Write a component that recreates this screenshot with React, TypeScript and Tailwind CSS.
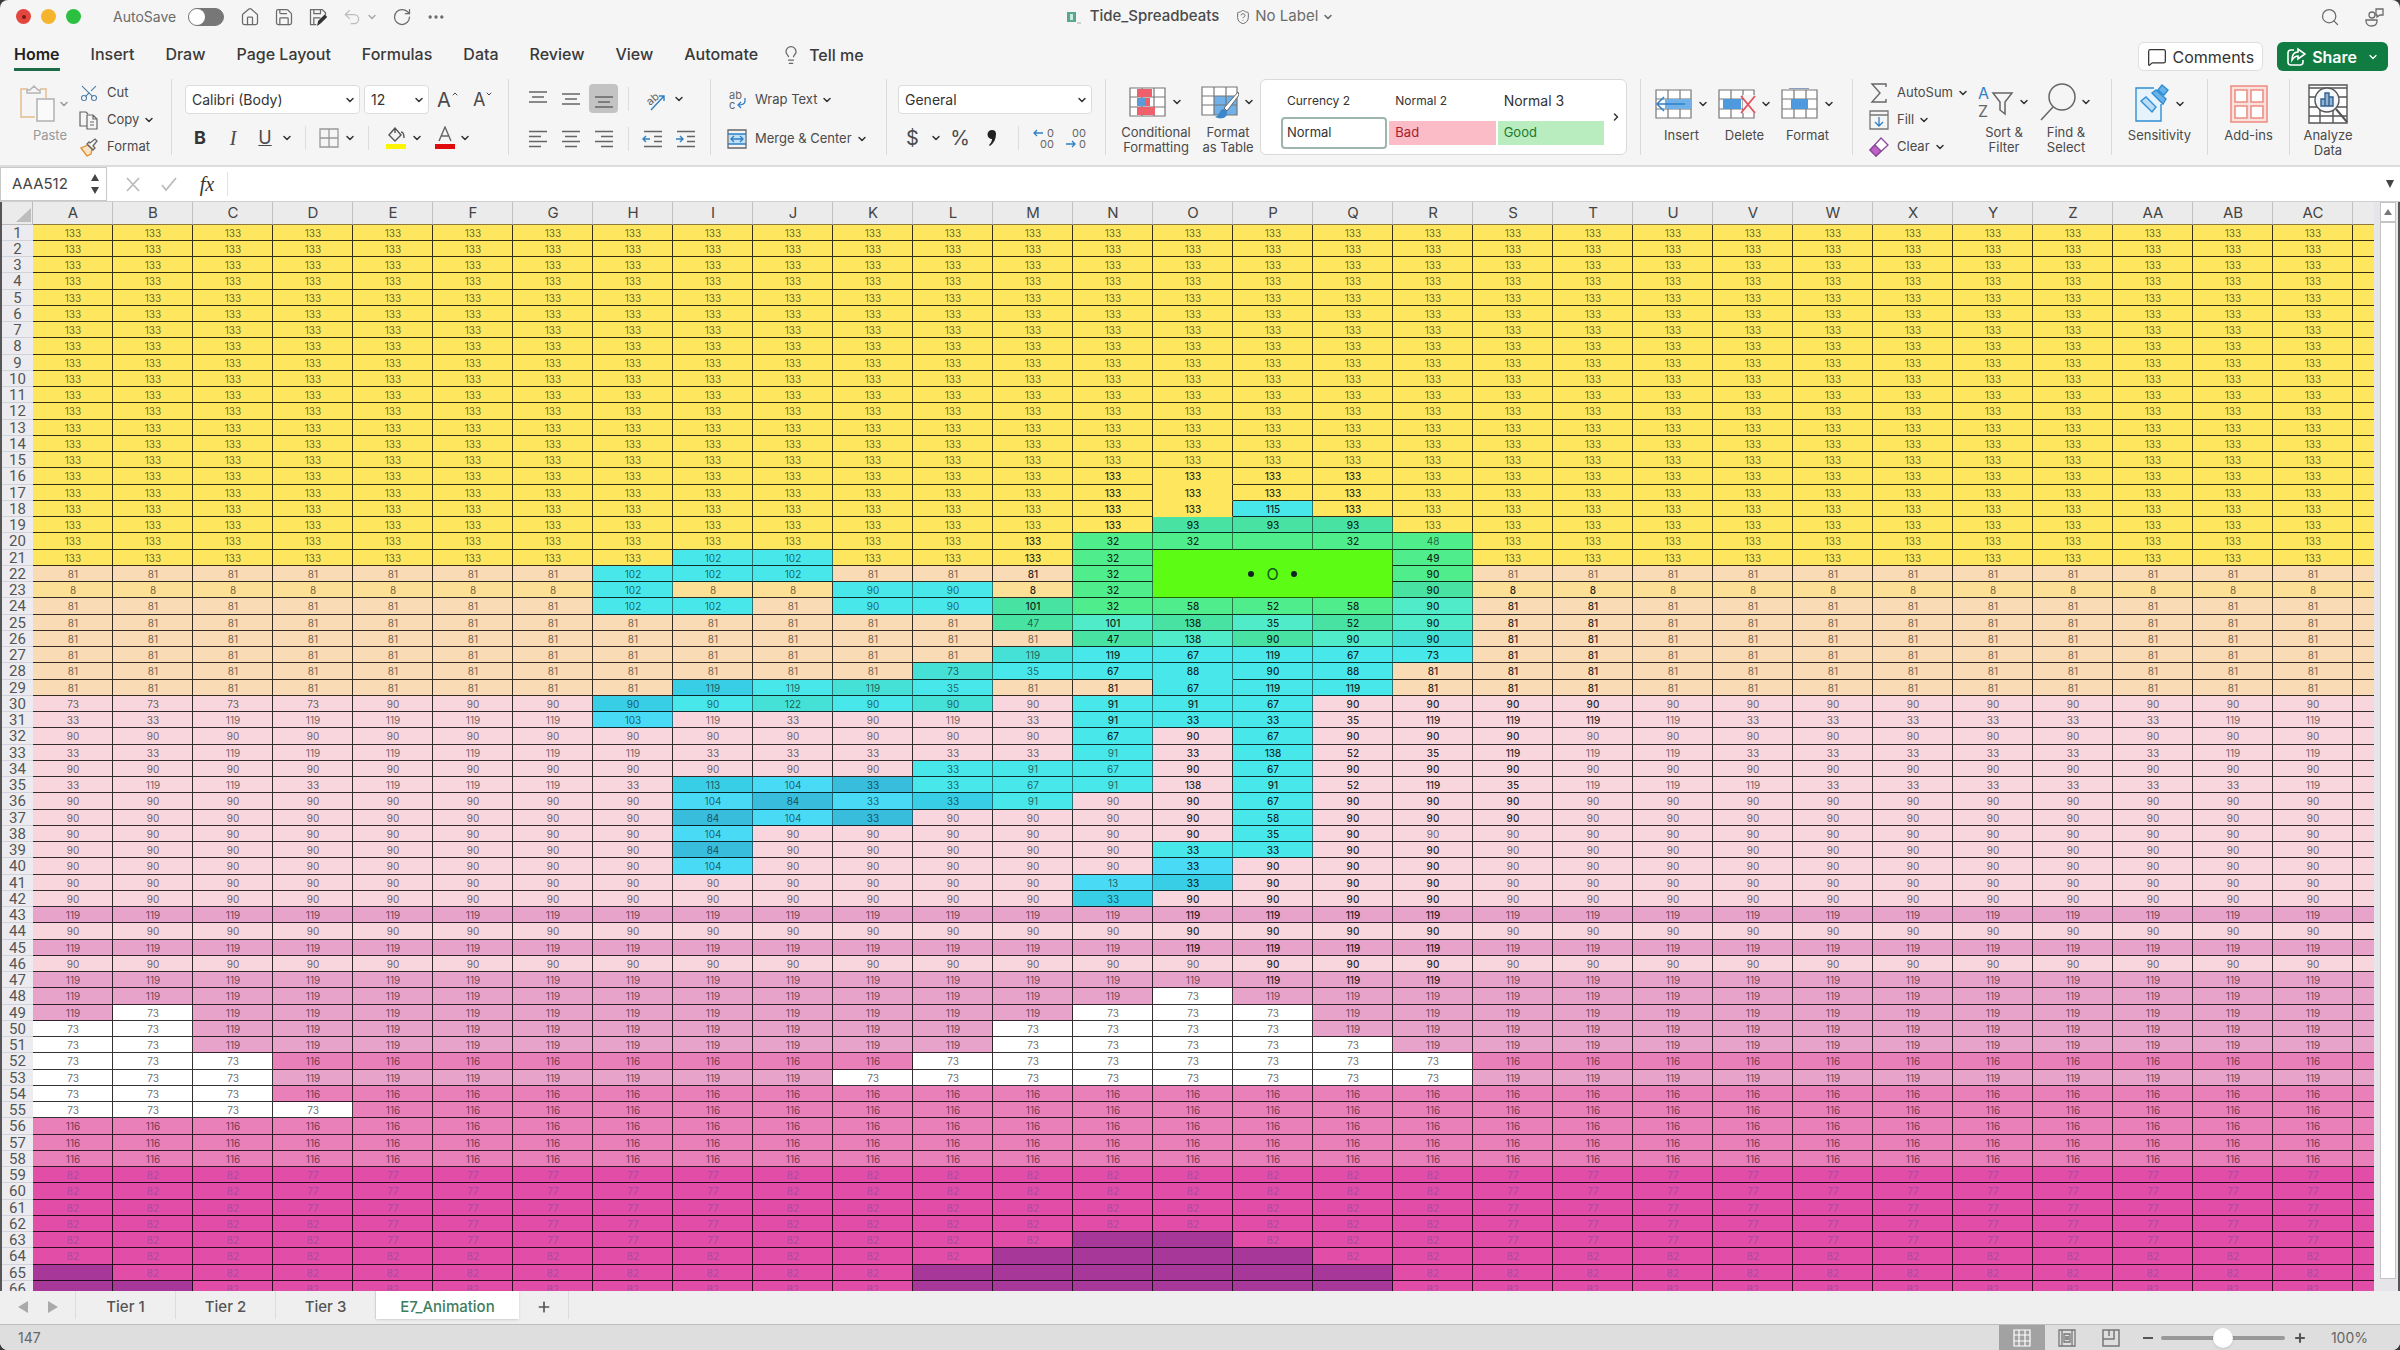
import React, { useState } from 'react';
import {
  ChevronDown,
  ChevronRight,
  ChevronUp,
  Ellipsis,
  House,
  Lightbulb,
  MessageSquare,
  Plus,
  RotateCw,
  Save,
  Scissors,
  Search,
  ShieldQuestionMark,
  Undo2,
} from 'lucide-react';
import clsx from 'clsx';

const COLUMNS = [...'ABCDEFGHIJKLMNOPQRSTUVWXYZ', 'AA', 'AB', 'AC'];
const ROW_COUNT = 66;

const fills: Record<string, string> = {
  yellow: 'bg-[#fee75e]',
  peach: 'bg-[#f9dcb6]',
  sand: 'bg-[#fbe095]',
  blush: 'bg-[#f9d6dd]',
  rose: 'bg-[#e8a3cb]',
  pink: 'bg-[#ea80ba]',
  magenta: 'bg-[#e14da7]',
  purple: 'bg-[#a73799]',
  white: 'bg-white',
  c: 'bg-[#48e8ea]',
  b: 'bg-[#38cfe6]',
  s: 'bg-[#49daf6]',
  d: 'bg-[#38bddd]',
  t: 'bg-[#50ebc8]',
  e: 'bg-[#45e0d6]',
  g: 'bg-[#50ed8c]',
  h: 'bg-[#48e3a2]',
};

// "column:value:fill" for every cell of the figure
const figure: Record<number, string> = {
  18: 'P:115:c',
  19: 'O:93:h P:93:h Q:93:h',
  20: 'N:32:g O:32:g P::g Q:32:g R:48:g',
  21: 'I:102:c J:102:c N:32:g R:49:g',
  22: 'H:102:c I:102:c J:102:c N:32:g R:90:g',
  23: 'H:102:c K:90:c L:90:c N:32:g R:90:h',
  24: 'H:102:c I:102:c K:90:c L:90:c M:101:h N:32:g O:58:g P:52:g Q:58:g R:90:t',
  25: 'M:47:h N:101:t O:138:h P:35:t Q:52:h R:90:t',
  26: 'N:47:h O:138:t P:90:h Q:90:t R:90:e',
  27: 'M:119:e N:119:c O:67:c P:119:c Q:67:c R:73:c',
  28: 'L:73:e M:35:c N:67:c O:88:c P:90:c Q:88:c',
  29: 'I:119:b J:119:c K:119:e L:35:c O:67:c P:119:c Q:119:c',
  30: 'H:90:b I:90:c J:122:e K:90:c L:90:e N:91:c O:91:c P:67:c',
  31: 'H:103:s N:91:c O:33:c P:33:c',
  32: 'N:67:c P:67:c',
  33: 'N:91:c P:138:c',
  34: 'L:33:c M:91:c N:67:c P:67:c',
  35: 'I:113:b J:104:s K:33:d L:33:c M:67:c N:91:c P:91:c',
  36: 'I:104:s J:84:d K:33:s L:33:b M:91:c P:67:c',
  37: 'I:84:d J:104:s K:33:d P:58:c',
  38: 'I:104:s P:35:c',
  39: 'I:84:d O:33:c P:33:c',
  40: 'I:104:s O:33:s',
  41: 'N:13:s O:33:b',
  42: 'N:33:b',
};

// [first column, last column] runs
const clouds: Record<number, string[][]> = {
  48: [['O', 'O']],
  49: [['B', 'B'], ['N', 'P']],
  50: [['A', 'B'], ['M', 'P']],
  51: [['A', 'B'], ['M', 'Q']],
  52: [['A', 'C'], ['L', 'R']],
  53: [['A', 'C'], ['K', 'R']],
  54: [['A', 'C']],
  55: [['A', 'D']],
};

const hills: Record<number, string[][]> = {
  63: [['N', 'O']],
  64: [['M', 'P']],
  65: [['A', 'A'], ['L', 'Q']],
  66: [['A', 'B'], ['L', 'Q']],
};

const plainValues: Record<number, string> = {
  31: '33 33 119 119 119 119 119 103 119 33 90 119 33 91 33 33 35 119 119 119 119 33 33 33 33 33 33 119 119',
  33: '33 33 119 119 119 119 119 119 33 33 33 33 33 91 33 138 52 35 119 119 119 33 33 33 33 33 33 119 119',
  35: '33 119 119 33 119 119 119 33 113 104 33 33 67 91 138 91 52 119 35 119 119 119 33 33 33 33 33 33 119',
};

// rows in which a column is written in the darker ink
const inked: Record<string, [number, number]> = {
  M: [20, 24],
  N: [16, 32],
  O: [16, 45],
  P: [16, 47],
  Q: [16, 47],
  R: [21, 47],
  S: [23, 37],
  T: [23, 31],
};

const inRuns = (runs: string[][] | undefined, col: number) =>
  (runs ?? []).some(([a, b]) => col >= COLUMNS.indexOf(a) && col <= COLUMNS.indexOf(b));

const baseFor = (row: number, col: number): [string, string] => {
  if (row <= 21) return ['133', 'yellow'];
  if (row === 23) return ['8', 'sand'];
  if (row <= 29) return ['81', 'peach'];
  if (row === 30 && col < 4) return ['73', 'blush'];
  if (row <= 42 || row === 44 || row === 46) return ['90', 'blush'];
  if (row <= 51 || row === 53) return ['119', 'rose'];
  if (row <= 58) return ['116', 'pink'];
  const low = row >= 64 || col < 3 || (col < 4 && row > 61) || (col > 8 && col < 18);
  return [low ? '82' : '77', 'magenta'];
};

const cellFor = (row: number, col: number) => {
  let [value, fill] = baseFor(row, col);
  if (plainValues[row]) value = plainValues[row].split(' ')[col] ?? '';
  const painted = (figure[row] ?? '')
    .split(' ')
    .map((c) => c.split(':'))
    .find(([name]) => name === COLUMNS[col]);
  if (painted) [, value, fill] = painted;
  if (inRuns(clouds[row], col)) [value, fill] = ['73', 'white'];
  if (inRuns(hills[row], col)) [value, fill] = ['', 'purple'];
  const range = inked[COLUMNS[col]];
  const dark = !!range && row >= range[0] && row <= range[1] && !(COLUMNS[col] === 'R' && row === 38);
  return { value, fill, dark, painted: !!painted };
};

const Chevron = ({ className = '' }: { className?: string }) => (
  <ChevronDown className={clsx('size-3 shrink-0 text-[#333]', className)} strokeWidth={3} />
);

const Divider = () => <div className="w-px shrink-0 self-stretch bg-[#dadada]" />;
const ShortDivider = () => <div className="h-6 w-px shrink-0 bg-[#dddddd]" />;

const TitleBar = () => (
  <header className="grid h-[33px] shrink-0 grid-cols-3 items-center px-4 text-[#6b6b6b]">
    <div className="flex items-center">
      <div className="flex gap-[10px]">
        <span className="flex size-[15px] items-center justify-center rounded-full bg-[#e2463f]">
          <span className="size-1 rounded-full bg-[#7c1a14]" />
        </span>
        <span className="size-[15px] rounded-full bg-[#f6b42c]" />
        <span className="size-[15px] rounded-full bg-[#2bc03f]" />
      </div>
      <label className="ml-8 flex items-center gap-3 text-sm">
        AutoSave
        <input type="checkbox" role="switch" className="peer sr-only" />
        <span className="flex h-[18px] w-9 items-center rounded-full border border-[#777] bg-[#777]">
          <span className="size-4 rounded-full bg-white" />
        </span>
      </label>
      <div className="ml-4 flex items-center gap-[14px]">
        <button aria-label="Home"><House className="size-5" strokeWidth={1.5} /></button>
        <button aria-label="Save"><Save className="size-5" strokeWidth={1.5} /></button>
        <button aria-label="Save as">
          <svg className="size-5" viewBox="0 0 24 24" fill="none" stroke="currentColor" strokeWidth="1.500">
            <path d="M10 21H3V3h14l4 4v3M7 3v5h8V3M7 21v-8h8" />
            <path d="m12 21 1-4 7-7 2 2-7 7z" fill="#333" stroke="#333" />
          </svg>
        </button>
        <button aria-label="Undo" className="flex items-center gap-1 text-[#bcbcbc]">
          <Undo2 className="size-5" strokeWidth={1.5} />
          <Chevron className="text-[#aaa]" />
        </button>
        <button aria-label="Redo"><RotateCw className="size-5" strokeWidth={1.5} /></button>
        <button aria-label="More"><Ellipsis className="size-5" /></button>
      </div>
    </div>
    <div className="flex items-center justify-center text-[15px]">
      <svg className="mr-2 h-4 w-4" viewBox="0 0 16 16" fill="none">
        <rect x="1" y="3" width="9" height="10" fill="#5aa88a" />
        <rect x="4" y="5" width="3" height="6" fill="#cfe9df" />
        <path d="M11 14h4" stroke="#aaa" />
      </svg>
      <span className="font-medium text-[#4a4a4a]">Tide_Spreadbeats</span>
      <button className="ml-4 flex items-center gap-1">
        <ShieldQuestionMark className="size-4" strokeWidth={1.5} />
        No Label
        <Chevron className="text-[#666]" />
      </button>
    </div>
    <div className="flex items-center justify-end gap-6">
      <button aria-label="Search"><Search className="size-5" strokeWidth={1.5} /></button>
      <button aria-label="Presence">
        <svg className="size-5" viewBox="0 0 20 20" fill="none" stroke="currentColor" strokeWidth="1.3">
          <circle cx="8" cy="8" r="3" />
          <path d="M2 13h11v1c0 3-2 5-5.500 5S2 17 2 14z" />
          <path d="M12 2h7v6h-3l-3 2V8h-1z" />
        </svg>
      </button>
    </div>
  </header>
);

const RibbonTabs = () => {
  const tabs = ['Home', 'Insert', 'Draw', 'Page Layout', 'Formulas', 'Data', 'Review', 'View', 'Automate'];
  return (
    <nav className="flex h-[43px] shrink-0 items-center justify-between pr-3 pl-[14px] text-base text-[#3a3a3a]">
      <div className="flex items-center gap-[31px]">
        {tabs.map((tab, i) => (
          <button
            key={tab}
            className={clsx(
              'border-b-[3px] pt-[3px] pb-0.5 leading-6',
              i === 0 ? 'border-[#1e6b48] font-semibold text-[#222]' : 'border-transparent font-medium',
            )}
          >
            {tab}
          </button>
        ))}
        <button className="-ml-2 flex items-center gap-2 font-medium">
          <Lightbulb className="size-5 text-[#666]" strokeWidth={1.5} />
          Tell me
        </button>
      </div>
      <div className="flex gap-[14px] pt-1">
        <button className="flex h-[29px] items-center gap-1.5 rounded-md border border-[#dedede] bg-white px-2 text-[#333]">
          <MessageSquare className="size-5" strokeWidth={1.5} />
          Comments
        </button>
        <button className="flex h-[29px] items-center gap-1.5 rounded-md bg-[#107c41] px-[9px] font-semibold text-white">
          <svg className="size-5" viewBox="0 0 20 20" fill="none" stroke="currentColor" strokeWidth="1.600">
            <path d="M8 3H5a3 3 0 0 0-3 3v9a3 3 0 0 0 3 3h9a3 3 0 0 0 3-3v-2" />
            <path d="M12 2v3c-4 0-6 3-6 8 2-3 3-4 6-4v3l7-5z" />
          </svg>
          Share
          <ChevronDown className="ml-1 size-3" strokeWidth={2.5} />
        </button>
      </div>
    </nav>
  );
};

const SmallButton = ({ icon, label, arrow }: { icon: React.ReactNode; label: string; arrow?: boolean }) => (
  <button className="flex h-[27px] shrink-0 items-center text-[13px]">
    <span className="flex w-7 justify-center">{icon}</span>
    <span className="ml-1">{label}</span>
    {arrow && <Chevron className="ml-1" />}
  </button>
);

const BigButton = ({ icon, lines, arrow, className }: {
  icon: React.ReactNode;
  lines: string[];
  arrow?: boolean;
  className?: string;
}) => (
  <button className={clsx('flex shrink-0 flex-col items-center text-[13px] leading-[15px]', className)}>
    <span className="flex h-[49px] items-center gap-1">
      {icon}
      {arrow && <Chevron />}
    </span>
    {lines.map((line) => <span key={line}>{line}</span>)}
  </button>
);

const Lines = ({ align, low }: { align: 'left' | 'center' | 'right'; low?: string }) => {
  const short = align === 'left' ? 'M2 8.500h12M2 18.500h12' : align === 'right' ? 'M8 8.500h12M8 18.500h12' : 'M5 8.500h12M5 18.500h12';
  return (
    <svg className="size-[22px]" viewBox="0 0 22 22" stroke="#666" strokeWidth="1.4" fill="none">
      <path d={low ?? 'M2 3.500h18M2 13.500h18'} />
      {!low && <path d={short} />}
    </svg>
  );
};

const Indent = ({ flip }: { flip?: boolean }) => (
  <svg className="size-[22px]" viewBox="0 0 22 22" fill="none" strokeWidth="1.4">
    <path d="M2 3.500h18M12 8.500h8M12 13.500h8M2 18.500h18" stroke="#666" />
    <path d={flip ? 'M1 11h7M5 8l3 3-3 3' : 'M8 11H1M4 8l-3 3 3 3'} stroke="#2f7fc4" />
  </svg>
);

const Sheet = ({ children }: { children?: React.ReactNode }) => (
  <svg className="h-8 w-[38px]" viewBox="0 0 38 32" fill="none">
    <rect x="1" y="2" width="35" height="28" fill="#fff" />
    <path d="M1 2h35v28H1zM1 11h35M1 21h35M13 2v28M25 2v28" stroke="#777" strokeWidth="1.200" />
    {children}
  </svg>
);

const iconButton = 'flex h-7 w-[33px] items-center justify-center';

const Ribbon = () => (
  <section className="flex h-[88px] shrink-0 items-start border-b-2 border-[#dddddd] text-[#4a4a4a]">
    <div className="flex h-[76px] w-full">
      <div className="flex w-[171px] shrink-0 pl-[18px]">
        <button className="flex w-[57px] flex-col text-[13px] leading-[15px] text-[#999]">
          <span className="flex h-[49px] items-center">
            <svg className="h-10 w-10" viewBox="0 0 40 40" fill="none" strokeWidth="1.500">
              <path d="M10 5H3v28h14M22 5h6v9" stroke="#e4bc8c" />
              <path d="M9 9V6h3l4-4 4 4h2v3z" stroke="#b5b5b5" fill="#f6f6f6" />
              <path d="M19 15h17v22H19z" stroke="#b0b0b0" fill="#fafafa" />
            </svg>
            <Chevron className="text-[#999]" />
          </span>
          <span className="ml-[7px]">Paste</span>
        </button>
        <div className="flex flex-col">
          <SmallButton
            icon={<Scissors className="size-5 -rotate-90 text-[#4c7ea8]" strokeWidth={1.3} />}
            label="Cut"
          />
          <SmallButton
            icon={
              <svg className="size-5" viewBox="0 0 20 20" fill="none" stroke="#666" strokeWidth="1.200">
                <path d="M8 16H1V2h6l2 2" />
                <path d="M8 5h6l4 4v10H8zM14 5v4h4M11 12h4M11 15h4" />
              </svg>
            }
            label="Copy"
            arrow
          />
          <SmallButton
            icon={
              <svg className="size-5" viewBox="0 0 20 20" fill="none" strokeWidth="1.300">
                <path d="m9 8-7 3 6 8 4-2 1-5z" stroke="#e08a2c" fill="#fbe3c6" />
                <path d="m8 7 6 6 2-2-2-2 4-5-2-2-5 4-1-1z" stroke="#666" />
              </svg>
            }
            label="Format"
          />
        </div>
      </div>
      <Divider />

      <div className="flex w-[336px] shrink-0 flex-col gap-[10px] pt-[6px] pl-[13px]">
        <div className="flex items-center gap-1">
          <span className="relative">
            <select aria-label="Font" className="h-[29px] w-[175px] appearance-none rounded-sm border border-[#dcdcdc] bg-white px-1.5 text-sm text-[#333]">
              <option>Calibri (Body)</option>
            </select>
            <Chevron className="pointer-events-none absolute top-[9px] right-1" />
          </span>
          <span className="relative">
            <select aria-label="Font size" className="h-[29px] w-[65px] appearance-none rounded-sm border border-[#dcdcdc] bg-white px-1.5 text-sm text-[#333]">
              <option>12</option>
            </select>
            <Chevron className="pointer-events-none absolute top-[9px] right-1" />
          </span>
          <button className="ml-1 flex w-7 items-center text-xl leading-7" aria-label="Increase font size">
            A<ChevronUp className="-mt-3 size-2" strokeWidth={3} />
          </button>
          <button className="ml-1 flex w-7 items-center text-lg leading-7" aria-label="Decrease font size">
            A<ChevronDown className="-mt-3 size-2" strokeWidth={3} />
          </button>
        </div>
        <div className="flex h-7 items-center">
          <button className="w-[30px] text-lg font-bold text-[#333]">B</button>
          <button className="w-9 font-['Liberation_Serif',serif] text-xl italic">I</button>
          <button className="w-7 text-lg underline">U</button>
          <Chevron className="mr-3 ml-0.5" />
          <ShortDivider />
          <button className="ml-3 flex items-center gap-1" aria-label="Borders">
            <svg className="size-[22px]" viewBox="0 0 22 22" fill="none" stroke="#999" strokeWidth="1.300">
              <path d="M2 2h18v18H2zM11 2v18M2 11h18" />
            </svg>
            <Chevron />
          </button>
          <div className="ml-3"><ShortDivider /></div>
          <button className="ml-4 flex items-center gap-1" aria-label="Fill colour">
            <svg className="h-6 w-[22px]" viewBox="0 0 22 24" fill="none">
              <path d="M10 2 4 9l6 6 6-6zM10 2v5M16 6c3 0 3 3 3 6" stroke="#555" strokeWidth="1.400" />
              <path d="M1 18h20v5H1z" fill="#fdf500" />
            </svg>
            <Chevron />
          </button>
          <button className="ml-3 flex items-center gap-1" aria-label="Font colour">
            <svg className="h-6 w-[20px]" viewBox="0 0 20 24" fill="none">
              <path d="m4 15 6-14 6 14M6 10h8" stroke="#666" strokeWidth="1.400" />
              <path d="M0 18h20v5H0z" fill="#e00b0b" />
            </svg>
            <Chevron />
          </button>
        </div>
      </div>
      <Divider />

      <div className="flex w-[201px] shrink-0 flex-col gap-3 pt-[5px] pl-3">
        <div className="flex items-center">
          <button className={iconButton} aria-label="Top"><Lines align="center" low="M2 4h18M5 9h12M2 14h18" /></button>
          <button className={iconButton} aria-label="Middle"><Lines align="center" low="M2 6h18M5 11h12M2 16h18" /></button>
          <button className="mx-0.5 flex h-[29px] w-[29px] items-center justify-center rounded-sm bg-[#c3c3c3]" aria-label="Bottom">
            <Lines align="center" low="M2 9h18M5 14h12M2 19h18" />
          </button>
          <div className="ml-2"><ShortDivider /></div>
          <button className="ml-3 flex items-center gap-1" aria-label="Orientation">
            <svg className="size-7" viewBox="0 0 28 28" fill="none">
              <text x="5" y="18" fontSize="11" fill="#666" transform="rotate(-40 11 14)">ab</text>
              <path d="M10 25 23 11M23 16v-5h-5" stroke="#2f7fc4" strokeWidth="1.400" />
            </svg>
            <Chevron />
          </button>
        </div>
        <div className="flex items-center">
          <button className={iconButton} aria-label="Align left"><Lines align="left" /></button>
          <button className={iconButton} aria-label="Align center"><Lines align="center" /></button>
          <button className={iconButton} aria-label="Align right"><Lines align="right" /></button>
          <div className="ml-2"><ShortDivider /></div>
          <button className="ml-2 flex h-7 w-8 items-center justify-center" aria-label="Decrease indent"><Indent /></button>
          <button className="flex h-7 w-[33px] items-center justify-center" aria-label="Increase indent"><Indent flip /></button>
        </div>
      </div>
      <Divider />

      <div className="flex w-[175px] shrink-0 flex-col gap-3 pt-[7px] pl-3">
        <SmallButton
          icon={
            <svg className="h-[26px] w-6" viewBox="0 0 24 26" fill="none">
              <text x="4" y="12" fontSize="11" fill="#666">ab</text>
              <text x="4" y="22" fontSize="11" fill="#666">c</text>
              <path d="M20 11v3c0 3-2 4-7 4M16 15l-3 3 3 3" stroke="#2f7fc4" strokeWidth="1.300" />
            </svg>
          }
          label="Wrap Text"
          arrow
        />
        <SmallButton
          icon={
            <svg className="size-5" viewBox="0 0 20 20" fill="none">
              <path d="M1 1h18v18H1z" stroke="#666" strokeWidth="1.300" />
              <path d="M2 5h16v10H2z" fill="#bfe0f7" />
              <path d="M4 10h12M7 7l-3 3 3 3M13 7l3 3-3 3M1 5h18M1 15h18" stroke="#2f7fc4" strokeWidth="1.300" />
            </svg>
          }
          label="Merge & Center"
          arrow
        />
      </div>
      <Divider />

      <div className="flex w-[218px] shrink-0 flex-col gap-[10px] pt-[6px] pl-[11px]">
        <span className="relative w-[194px]">
          <select aria-label="Number format" className="h-[29px] w-full appearance-none rounded-sm border border-[#dcdcdc] bg-white px-1.5 text-sm text-[#333]">
            <option>General</option>
          </select>
          <Chevron className="pointer-events-none absolute top-[9px] right-1" />
        </span>
        <div className="flex h-7 items-center text-xl">
          <button className="flex w-11 items-center justify-between pl-2" aria-label="Currency">$<Chevron /></button>
          <button className="ml-1 w-7" aria-label="Percent">%</button>
          <button className="ml-1 flex w-7 justify-center" aria-label="Comma">
            <svg className="h-5 w-3" viewBox="0 0 12 20"><path d="M6 2a4 4 0 0 1 4 4c0 5-2 9-6 12l-1-1c2-2 3-4 3-6a4 4 0 1 1 0-9" fill="#222" /></svg>
          </button>
          <div className="mr-1 ml-3"><ShortDivider /></div>
          {['Increase decimal', 'Decrease decimal'].map((name, i) => (
            <button key={name} className="ml-2.5 w-[22px]" aria-label={name}>
              <svg className="h-[26px] w-[22px]" viewBox="0 0 22 26" fill="none">
                <text x={i ? 7 : 14} y="12" fontSize="11" fill="#666">{i ? '00' : '0'}</text>
                <text x={i ? 14 : 7} y="23" fontSize="11" fill="#666">{i ? '0' : '00'}</text>
                <path d={i ? 'M1 19h9M7 16l3 3-3 3' : 'M10 8H1M4 5 1 8l3 3'} stroke="#2f7fc4" strokeWidth="1.300" />
              </svg>
            </button>
          ))}
        </div>
      </div>
      <Divider />

      <div className="flex w-[154px] shrink-0">
        <BigButton
          className="w-[100px]"
          arrow
          lines={['Conditional', 'Formatting']}
          icon={
            <Sheet>
              <path d="M8 3h15v8H8zM16 12h5v8h-5zM8 21h18v8H8z" fill="#f0606c" />
              <path d="M8 12h8v8H8z" fill="#5b9bd8" />
            </Sheet>
          }
        />
        <BigButton
          className="-ml-2 w-[60px]"
          arrow
          lines={['Format', 'as Table']}
          icon={
            <svg className="h-9 w-[38px]" viewBox="0 0 38 36" fill="none">
              <path d="M1 3h35v28H1z" fill="#fff" />
              <path d="M13 12h23v19H13z" fill="#6fb1e8" />
              <path d="M1 3h35v28H1zM1 12h35M1 21h35M13 3v28M25 3v28" stroke="#777" strokeWidth="1.200" />
              <path d="m37 8-14 16 3 3 12-16z" fill="#fff" stroke="#666" />
              <path d="M23 25c-5 0-4 7-9 8 6 3 13 1 12-5z" fill="#3b86cc" />
            </svg>
          }
        />
      </div>

      <div className="flex min-w-0 flex-1 items-center rounded-md border border-[#d9d9d9] bg-white pr-1 pl-5 text-[#333]">
        <div className="grid h-16 flex-1 grid-cols-3 grid-rows-2 gap-x-0.5 text-left">
          <button className="px-1.5 text-left text-xs">Currency 2</button>
          <button className="px-1.5 text-left text-xs">Normal 2</button>
          <button className="px-1.5 text-left text-sm">Normal 3</button>
          <button className="rounded-sm border-2 border-[#9db5ab] px-1 text-left text-[13px]">Normal</button>
          <button className="my-1 bg-[#fbbcc8] px-1.5 text-left text-[13px] text-[#a8202c]">Bad</button>
          <button className="my-1 bg-[#b9edc0] px-1.5 text-left text-[13px] text-[#1d7a2e]">Good</button>
        </div>
        <button aria-label="More styles" className="ml-1.5"><ChevronRight className="size-3" strokeWidth={3} /></button>
      </div>
      <div className="ml-[13px] flex"><Divider /></div>

      <div className="flex w-[211px] shrink-0 pl-[9px]">
        <BigButton
          className="w-[63px]"
          arrow
          lines={['Insert']}
          icon={
            <Sheet>
              <path d="M10 11h27v10H10z" fill="#6fb1e8" />
              <path d="M30 16H2M9 9l-7 7 7 7" stroke="#2f7fc4" strokeWidth="1.500" />
            </Sheet>
          }
        />
        <BigButton
          className="w-[63px]"
          arrow
          lines={['Delete']}
          icon={
            <Sheet>
              <path d="M5 11h18v10H5z" fill="#4f9ade" />
              <path d="M25 7h13v18H25z" fill="#f5f5f5" />
              <path d="m23 8 14 17M37 8 23 25" stroke="#e4505c" strokeWidth="1.800" />
            </Sheet>
          }
        />
        <BigButton
          className="w-[63px]"
          arrow
          lines={['Format']}
          icon={
            <Sheet>
              <path d="M10 11h17v10H10z" fill="#4f9ade" />
              <path d="M8 0h20" stroke="#667fb0" strokeWidth="1.500" />
            </Sheet>
          }
        />
      </div>
      <Divider />

      <div className="flex w-[258px] shrink-0 pl-3">
        <div className="flex w-[108px] shrink-0 flex-col">
          <SmallButton
            icon={<svg className="size-5" viewBox="0 0 20 20" fill="none" stroke="#666" strokeWidth="1.400"><path d="M17 4V1H3l8 9-8 9h14v-3" /></svg>}
            label="AutoSum"
            arrow
          />
          <SmallButton
            icon={
              <svg className="size-5" viewBox="0 0 20 20" fill="none" strokeWidth="1.300">
                <path d="M1 1h18v18H1zM1 5h18" stroke="#777" />
                <path d="M10 7v9M6 12l4 4 4-4" stroke="#2f7fc4" />
              </svg>
            }
            label="Fill"
            arrow
          />
          <SmallButton
            icon={
              <svg className="size-5" viewBox="0 0 20 20" fill="none" stroke="#8a4a9a" strokeWidth="1.300">
                <path d="M12 1 1 13l6 6L19 8z" fill="#fff" />
                <path d="m6 8-5 5 6 6 5-5z" fill="#c05fc8" />
              </svg>
            }
            label="Clear"
            arrow
          />
        </div>
        <BigButton
          className="w-[62px]"
          arrow
          lines={['Sort &', 'Filter']}
          icon={
            <svg className="h-10 w-9" viewBox="0 0 36 40" fill="none">
              <text x="0" y="17" fontSize="16" fill="#2f7fc4">A</text>
              <text x="0" y="35" fontSize="16" fill="#666">Z</text>
              <path d="M15 11h19l-7 9v12l-5-4v-8z" stroke="#666" strokeWidth="1.500" />
            </svg>
          }
        />
        <BigButton
          className="w-[62px]"
          arrow
          lines={['Find &', 'Select']}
          icon={
            <svg className="h-10 w-9" viewBox="0 0 36 40" fill="none" stroke="#666" strokeWidth="1.500">
              <circle cx="22" cy="15" r="13" />
              <path d="M13 25 1 38" />
            </svg>
          }
        />
      </div>
      <Divider />

      <BigButton
        className="w-[95px]"
        arrow
        lines={['Sensitivity']}
        icon={
          <svg className="h-10 w-9" viewBox="0 0 36 40" fill="none" stroke="#2f8fd4" strokeWidth="1.400">
            <path d="M20 4H2v33h25V20" fill="#e6f3fd" />
            <path d="m7 17 5-4 10 10-4 5z" fill="#bcdcf5" />
            <path d="m18 9 4-3 10 9-3 5zM24 6l4-5 6 5-4 5z" fill="#69b2ea" />
          </svg>
        }
      />
      <Divider />
      <BigButton
        className="w-[81px]"
        lines={['Add-ins']}
        icon={
          <svg className="h-10 w-[38px]" viewBox="0 0 38 40" fill="none" stroke="#ec8a80" strokeWidth="1.500">
            <path d="M1 2h36v36H1z" fill="#fbe0dc" />
            <path d="M5 6h12v12H5zM21 6h12v12H21zM5 22h12v12H5zM21 22h12v12H21z" fill="#fff" />
          </svg>
        }
      />
      <Divider />
      <div className="w-[110px] shrink-0">
        <BigButton
          className="w-[76px]"
          lines={['Analyze', 'Data']}
          icon={
            <svg className="h-[42px] w-10" viewBox="0 0 40 42" fill="none" stroke="#555" strokeWidth="1.400">
              <path d="M1 2h38v38H1zM1 5h38M1 14h38M1 24h38M1 33h38M12 24v16M25 24v16" fill="#fff" />
              <circle cx="19" cy="17" r="12" fill="#f4f8fc" />
              <path d="m28 26 11 13" strokeWidth="2" />
              <path d="M13 16h4v7h-4zM17 10h4v13h-4zM21 14h4v9h-4z" fill="#8fb4d8" stroke="#345f8a" />
            </svg>
          }
        />
      </div>
    </div>
  </section>
);

const FormulaBar = () => (
  <div className="flex h-[34px] shrink-0 items-center bg-white">
    <div className="flex h-full w-[107px] items-center justify-between border border-[#c9c9c9] pr-1.5 pl-[11px]">
      <input aria-label="Name box" defaultValue="AAA512" className="w-[70px] text-[15px] text-[#444] outline-none" />
      <svg className="h-6 w-2.5" viewBox="0 0 10 24" fill="#444">
        <path d="m5 2 4 7H1zM5 22l4-7H1z" />
      </svg>
    </div>
    <div className="flex items-center gap-4 pl-4 text-[#bbb]">
      <button aria-label="Cancel">
        <svg className="size-5" viewBox="0 0 20 20" stroke="currentColor" strokeWidth="1.800"><path d="m4 4 12 13M16 4 4 17" /></svg>
      </button>
      <button aria-label="Enter">
        <svg className="size-5" viewBox="0 0 20 20" fill="none" stroke="currentColor" strokeWidth="1.800"><path d="m3 11 4 5L17 4" /></svg>
      </button>
      <button aria-label="Insert function" className="w-6 font-['Liberation_Serif',serif] text-xl text-[#333] italic">fx</button>
    </div>
    <div className="ml-2 h-6 w-px bg-[#e4e4e4]" />
    <input aria-label="Formula" className="h-full flex-1 px-2 outline-none" />
    <button aria-label="Expand formula bar" className="w-5">
      <svg className="mx-auto h-2 w-2" viewBox="0 0 8 8"><path d="M0 0h8L4 8z" fill="#444" /></svg>
    </button>
  </div>
);

const Grid = () => (
  <div className="flex min-h-0 flex-1 overflow-hidden border-t border-[#cfcfcf]">
    <table className="w-full table-fixed border-separate border-spacing-0 self-start border-l-2 border-[#555] bg-[#ececf0] text-center">
      <colgroup>
        <col className="w-[31px]" />
        {COLUMNS.map((name) => <col key={name} />)}
        <col className="w-[21px]" />
      </colgroup>
      <thead>
        <tr className="h-[23px] bg-[#ebebeb] text-[15px] leading-5 text-[#444]">
          <th className="border-r border-b border-[#bcbcbc]" aria-label="Select all">
            <svg className="mt-1 ml-auto h-3.5 w-4" viewBox="0 0 16 14"><path d="M15 0v14H0z" fill="#bdbdbd" /></svg>
          </th>
          {COLUMNS.map((name) => (
            <th key={name} scope="col" className="border-r border-b border-r-[#c0c0c0] border-b-[#8c7a3a] pl-px font-normal">{name}</th>
          ))}
          <th className="border-b border-b-[#8c7a3a]" />
        </tr>
      </thead>
      <tbody>
        {Array.from({ length: ROW_COUNT }, (_, i) => i + 1).map((row) => (
          <tr key={row} className={row % 4 === 0 ? 'h-[17px]' : 'h-4'}>
            <th scope="row" className="border-b border-[#d2d2da] p-0 font-['Roboto',sans-serif] text-[15px] leading-[14px] font-normal text-[#555]">
              {row}
            </th>
            {COLUMNS.map((name, col) => {
              if (row >= 21 && row <= 23 && col >= 14 && col <= 16) {
                if (row !== 21 || col !== 14) return null;
                return (
                  <td key={name} rowSpan={3} colSpan={3} className="border-r border-b border-black/60 bg-[#5dfc14] p-0 text-[#123]">
                    <div className="flex items-center justify-center gap-3 leading-5">
                      <span className="size-1.5 rounded-full bg-[#122]" />
                      <span className="text-base text-[#0d5a1c]">O</span>
                      <span className="size-1.5 rounded-full bg-[#122]" />
                    </div>
                  </td>
                );
              }
              const { value, fill, dark, painted } = cellFor(row, col);
              const open = name === 'O' && [16, 17, 18, 28].includes(row);
              return (
                <td
                  key={name}
                  className={clsx(
                    'border-r border-b py-0 pr-0 pl-px text-[10px] leading-3',
                    fills[fill],
                    open ? 'border-b-transparent' : 'border-b-black/80',
                    painted ? 'border-r-black/50' : 'border-r-black/80',
                    dark ? 'font-medium text-black/85' : row >= 59 ? 'text-[#7a4aa0]/60' : 'text-black/60',
                  )}
                >
                  {value}
                </td>
              );
            })}
            <td className={clsx('border-b border-b-black/80 p-0', fills[baseFor(row, 28)[1]])} />
          </tr>
        ))}
      </tbody>
    </table>
    <div className="flex w-[26px] shrink-0 flex-col border-r-2 border-[#555] bg-[#e6e6ea] pr-0.5 pl-1.5">
      <button aria-label="Scroll up" className="flex h-5 items-center justify-center border border-[#c4c4c4] bg-white">
        <svg className="h-1.5 w-2" viewBox="0 0 8 6"><path d="M4 0l4 6H0z" fill="#777" /></svg>
      </button>
      <div className="mb-3 flex-1 border border-[#c4c4c4] bg-white" />
    </div>
  </div>
);

const SheetTabs = () => {
  const [active, setActive] = useState('E7_Animation');
  return (
    <div className="flex h-[33px] shrink-0 items-start bg-[#efefef] text-[15px] font-medium text-[#555]">
      <div className="flex h-7 w-[76px] items-center gap-5 border-r border-[#dcdcdc] pt-1 pl-[18px]">
        <button aria-label="Previous sheet"><svg className="h-3 w-2.5" viewBox="0 0 10 12"><path d="M10 0v12L0 6z" fill="#aaa" /></svg></button>
        <button aria-label="Next sheet"><svg className="h-3 w-2.5" viewBox="0 0 10 12"><path d="M0 0v12l10-6z" fill="#aaa" /></svg></button>
      </div>
      {['Tier 1', 'Tier 2', 'Tier 3', 'E7_Animation'].map((tab) => (
        <button
          key={tab}
          onClick={() => setActive(tab)}
          className={clsx(
            'h-7 pt-1',
            tab === 'E7_Animation' ? 'w-[143px]' : 'w-[100px] border-r border-[#dcdcdc]',
            tab === active && 'bg-white text-[#3f7d5e] shadow',
          )}
        >
          {tab}
        </button>
      ))}
      <button aria-label="New sheet" className="flex h-7 w-[50px] items-center justify-center border-r border-[#dcdcdc] pt-1">
        <Plus className="size-4" strokeWidth={2.5} />
      </button>
    </div>
  );
};

const StatusBar = () => (
  <footer className="flex h-[26px] shrink-0 items-center justify-between border-t border-[#bdbdbd] bg-[#dedede] pr-8 pl-[18px] text-sm text-[#666]">
    <span>147</span>
    <div className="flex h-full items-center">
      <button aria-label="Normal view" className="flex h-full w-[46px] items-center justify-center bg-[#a2a2a2]">
        <svg className="size-[18px]" viewBox="0 0 18 18" fill="none" stroke="#fff" strokeWidth="1.200">
          <path d="M1 1h16v16H1zM6 1v16M12 1v16M1 6h16M1 12h16" />
        </svg>
      </button>
      <button aria-label="Page layout view" className="flex w-11 justify-center">
        <svg className="size-[18px]" viewBox="0 0 18 18" fill="none" stroke="#777" strokeWidth="1.300">
          <path d="M1 1h16v16H1zM4 1v16M14 1v16M6 5h6v8H6zM7 8h4M7 10h4" />
        </svg>
      </button>
      <button aria-label="Page break view" className="flex w-11 justify-center">
        <svg className="size-[18px]" viewBox="0 0 18 18" fill="none" stroke="#777" strokeWidth="1.500">
          <path d="M1 1h16v16H1zM1 10h11V1M7 1v6" />
        </svg>
      </button>
      <span className="ml-2.5 h-0.5 w-2.5 bg-[#555]" />
      <input
        type="range"
        aria-label="Zoom"
        defaultValue={50}
        className="mx-2 h-1 w-[124px] appearance-none rounded-full bg-[#999] [&::-webkit-slider-thumb]:size-5 [&::-webkit-slider-thumb]:appearance-none [&::-webkit-slider-thumb]:rounded-full [&::-webkit-slider-thumb]:bg-white [&::-webkit-slider-thumb]:shadow"
      />
      <Plus className="size-3.5 text-[#555]" strokeWidth={3.5} />
      <span className="ml-6">100%</span>
    </div>
  </footer>
);

const App = () => (
  <div className="h-screen bg-[#3a3a3a]">
    <div className="flex h-full flex-col overflow-hidden rounded-lg bg-[#f5f5f5] font-['Inter','Liberation_Sans',sans-serif]">
      <TitleBar />
      <RibbonTabs />
      <div className="h-[3px] shrink-0" />
      <Ribbon />
      <FormulaBar />
      <Grid />
      <SheetTabs />
      <StatusBar />
    </div>
  </div>
);

export default App;
